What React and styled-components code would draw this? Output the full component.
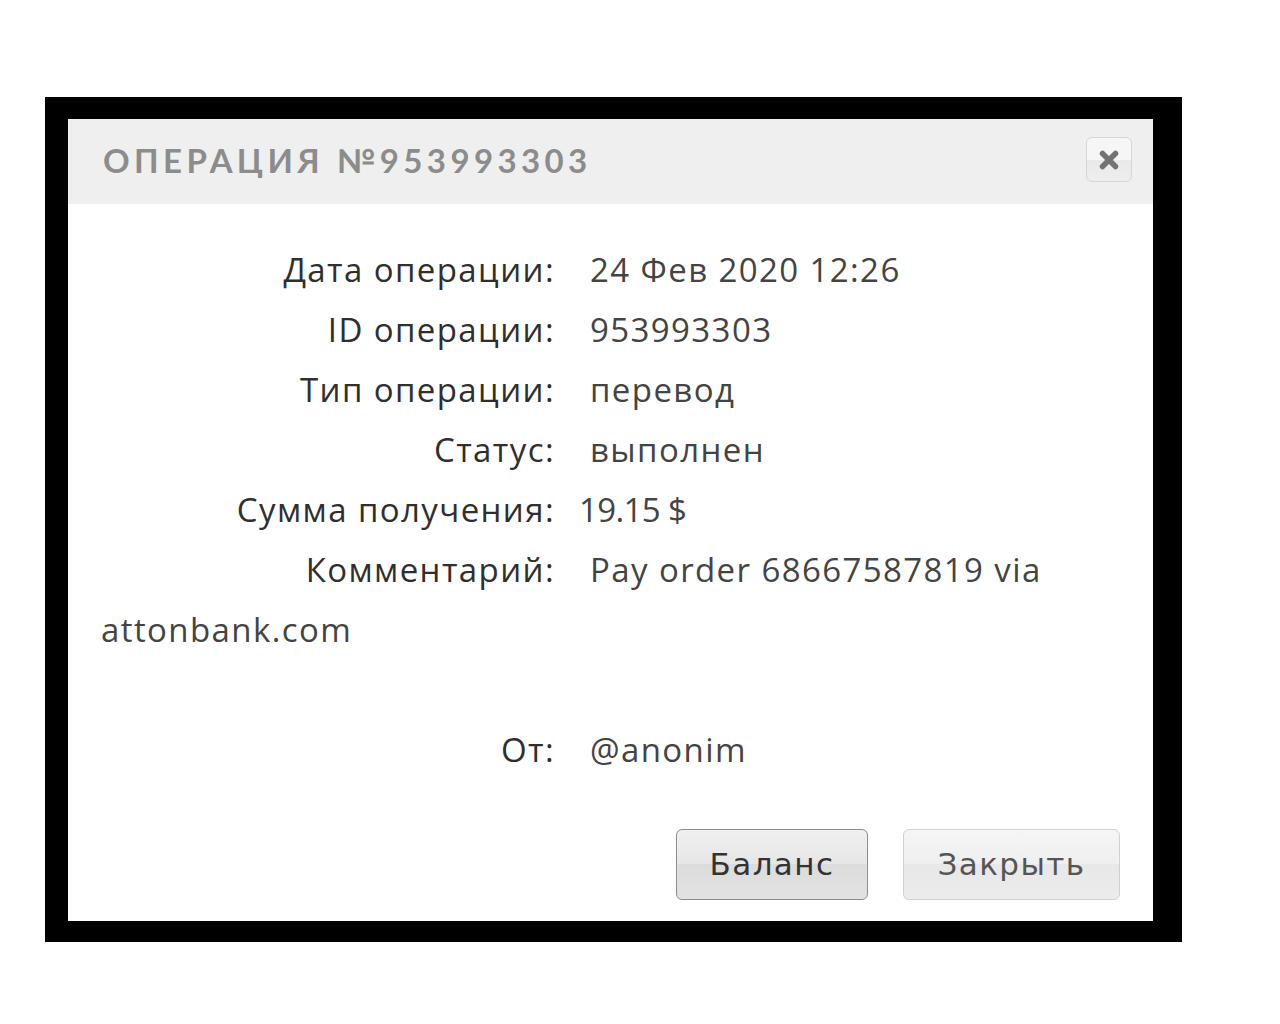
import React from 'react'
import styled, { createGlobalStyle } from 'styled-components'

const GlobalStyle = createGlobalStyle`
  html, body {
    margin: 0;
    padding: 0;
    background: #ffffff;
  }
`

const rows = [
  { label: 'Дата операции:', value: '24 Фев 2020 12:26' },
  { label: 'ID операции:', value: '953993303' },
  { label: 'Тип операции:', value: 'перевод' },
  { label: 'Статус:', value: 'выполнен' },
  { label: 'Сумма получения:', value: '19.15 $', tight: true },
  { label: 'Комментарий:', value: 'Pay order 68667587819 via attonbank.com' },
]

function App() {
  return (
    <Page>
      <GlobalStyle />
      <Frame>
        <Dialog>
          <Header>
            <Title>Операция №953993303</Title>
            <CloseButton aria-label="close">
              <svg width="22" height="22" viewBox="0 0 22 22">
                <path
                  d="M4.5 4.5 L17.5 17.5 M17.5 4.5 L4.5 17.5"
                  stroke="#737373"
                  strokeWidth="5.5"
                  strokeLinecap="round"
                />
              </svg>
            </CloseButton>
          </Header>
          <Body>
            {rows.map((r) => (
              <Line key={r.label}>
                <Label>{r.label}</Label>
                <Value $tight={r.tight}>{r.value}</Value>
              </Line>
            ))}
            <Spacer />
            <Line>
              <Label>От:</Label>
              <Value>@anonim</Value>
            </Line>
            <Footer>
              <Button $width={192} $primary>Баланс</Button>
              <Button $width={217}>Закрыть</Button>
            </Footer>
          </Body>
        </Dialog>
      </Frame>
    </Page>
  )
}

export default App

const Page = styled.div`
  padding: 97px 0 0 45px;
`

const Frame = styled.div`
  display: inline-block;
  background: #000000;
  padding: 22px 29px 21px 23px;
`

const Dialog = styled.div`
  width: 1085px;
  background: #ffffff;
`

const Header = styled.div`
  height: 85px;
  background: #efefef;
  display: flex;
  align-items: center;
  justify-content: space-between;
  padding: 0 21px 0 35px;
  box-sizing: border-box;
`

const Title = styled.h1`
  margin: 0 0 4px 0;
  font-family: 'Lato', 'DejaVu Sans', sans-serif;
  font-weight: 700;
  font-size: 33px;
  letter-spacing: 4.4px;
  text-transform: uppercase;
  color: #8c8c8c;
`

const CloseButton = styled.div`
  width: 46px;
  height: 45px;
  margin-bottom: 4px;
  box-sizing: border-box;
  border: 1px solid #d6d6d6;
  border-radius: 6px;
  background: linear-gradient(#f6f6f6, #f6f6f6 50%, #e9e9e9 50%, #eeeeee);
  display: flex;
  align-items: center;
  justify-content: center;
`

const Body = styled.div`
  padding: 36px 33px 21px 33px;
  font-family: 'Open Sans', 'Liberation Sans', sans-serif;
  font-size: 33px;
  letter-spacing: 1.4px;
  line-height: 60px;
  color: #3a3a3a;
`

const Line = styled.div``

const Label = styled.span`
  display: inline-block;
  width: 454px;
  text-align: right;
  color: #2f2f2f;
`

const Value = styled.span`
  margin-left: ${(p) => (p.$tight ? '24px' : '35px')};
  letter-spacing: ${(p) => (p.$tight ? '-0.6px' : '1.4px')};
  color: #444444;
`

const Spacer = styled.div`
  height: 60px;
`

const Footer = styled.div`
  display: flex;
  justify-content: flex-end;
  gap: 35px;
  margin-top: 49px;
`

const Button = styled.div`
  width: ${(p) => p.$width}px;
  height: 71px;
  box-sizing: border-box;
  border-radius: 6px;
  border: 1px solid ${(p) => (p.$primary ? '#8c8c8c' : '#d0d0d0')};
  background: ${(p) =>
    p.$primary
      ? 'linear-gradient(#f0f0f0, #e6e6e6 50%, #dcdcdc 50%, #e2e2e2)'
      : 'linear-gradient(#f5f5f5, #efefef 50%, #e8e8e8 50%, #ececec)'};
  display: flex;
  align-items: center;
  justify-content: center;
  font-family: 'DejaVu Sans', 'Liberation Sans', sans-serif;
  font-size: 31px;
  line-height: 1;
  color: ${(p) => (p.$primary ? '#333333' : '#555555')};
`
